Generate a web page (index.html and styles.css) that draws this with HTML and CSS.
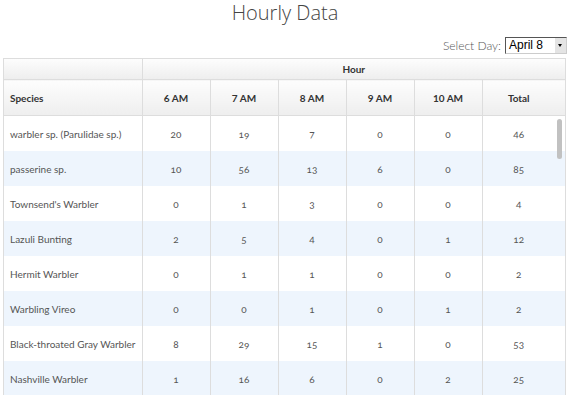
FILE: index.html
```html
<!DOCTYPE html>
<html lang="en">
<head>
    <meta charset="UTF-8">
    <title>Hourly Data</title>
    <link rel="stylesheet" href="styles.css">
</head>
<body>

<h1 class="page-title">Hourly Data</h1>

<div class="day-picker">
    <label for="daySelect">Select Day:</label>
    <div class="select-box" id="daySelect">
        <span class="select-value">April 8</span>
        <span class="select-arrow"></span>
    </div>
</div>

<div class="data-table">
    <table class="table-head">
        <colgroup>
            <col class="col-species">
            <col class="col-hour"><col class="col-hour"><col class="col-hour"><col class="col-hour"><col class="col-hour">
            <col class="col-total">
        </colgroup>
        <tr class="group-row">
            <th></th>
            <th colspan="6">Hour</th>
        </tr>
        <tr class="label-row">
            <th class="species">Species</th>
            <th>6 AM</th>
            <th>7 AM</th>
            <th>8 AM</th>
            <th>9 AM</th>
            <th>10 AM</th>
            <th class="total">Total</th>
        </tr>
    </table>

    <div class="table-body">
        <table>
            <colgroup>
                <col class="col-species">
                <col class="col-hour"><col class="col-hour"><col class="col-hour"><col class="col-hour"><col class="col-hour">
                <col class="col-total">
            </colgroup>
            <tr><td class="species">warbler sp. (Parulidae sp.)</td><td>20</td><td>19</td><td>7</td><td>0</td><td>0</td><td class="total">46</td></tr>
            <tr><td class="species">passerine sp.</td><td>10</td><td>56</td><td>13</td><td>6</td><td>0</td><td class="total">85</td></tr>
            <tr><td class="species">Townsend's Warbler</td><td>0</td><td>1</td><td>3</td><td>0</td><td>0</td><td class="total">4</td></tr>
            <tr><td class="species">Lazuli Bunting</td><td>2</td><td>5</td><td>4</td><td>0</td><td>1</td><td class="total">12</td></tr>
            <tr><td class="species">Hermit Warbler</td><td>0</td><td>1</td><td>1</td><td>0</td><td>0</td><td class="total">2</td></tr>
            <tr><td class="species">Warbling Vireo</td><td>0</td><td>0</td><td>1</td><td>0</td><td>1</td><td class="total">2</td></tr>
            <tr><td class="species">Black-throated Gray Warbler</td><td>8</td><td>29</td><td>15</td><td>1</td><td>0</td><td class="total">53</td></tr>
            <tr><td class="species">Nashville Warbler</td><td>1</td><td>16</td><td>6</td><td>0</td><td>2</td><td class="total">25</td></tr>
        </table>
        <div class="scroll-thumb"></div>
    </div>
</div>

</body>
</html>
```

FILE: styles.css
```css
html, body {
    margin: 0;
    padding: 0;
    background-color: #fff;
    font-family: Lato, "Open Sans", sans-serif;
    color: #555;
}

.page-title {
    margin: 0;
    height: 30px;
    line-height: 26px;
    text-align: center;
    font-family: "Open Sans", sans-serif;
    font-weight: 300;
    font-size: 20px;
    color: #444;
}

.day-picker {
    display: flex;
    justify-content: flex-end;
    align-items: center;
    gap: 4px;
    height: 18px;
    margin: 6px 3px 4px 0;
}

.day-picker label {
    font-size: 12px;
    font-weight: 300;
    color: #555;
}

.select-box {
    display: flex;
    align-items: stretch;
    width: 60px;
    height: 15px;
    border-top: 1px solid #555;
    border-left: 1px solid #555;
    border-right: 1px solid #ccc;
    border-bottom: 1px solid #ccc;
    background: #fff;
}

.select-value {
    flex: 1;
    padding-left: 3px;
    font-family: "Liberation Sans", Arial, sans-serif;
    font-size: 12px;
    line-height: 15px;
    color: #000;
}

.select-arrow {
    width: 11px;
    position: relative;
    background: #e4e4e4;
    border-left: 1px solid #fff;
}

.select-arrow::after {
    content: "";
    position: absolute;
    left: 3px;
    top: 6px;
    border-left: 2px solid transparent;
    border-right: 2px solid transparent;
    border-top: 3px solid #000;
}

.data-table {
    margin: 0 4px 0 3px;
    border: 1px solid #ddd;
}

.data-table table {
    width: 100%;
    table-layout: fixed;
    border-collapse: collapse;
}

.col-species { width: 138px; }
.col-hour { width: 68px; }

th {
    background: linear-gradient(to bottom, #fdfdfd, #eeeeee);
    font-size: 10px;
    font-weight: bold;
    color: #333;
    text-align: center;
    border-left: 1px solid #ddd;
    border-bottom: 1px solid #ddd;
    padding: 0;
}

th:first-child {
    border-left: none;
}

.group-row th {
    height: 20px;
}

.label-row th {
    height: 35px;
}

.species {
    text-align: left;
    padding-left: 6px;
}

.total {
    padding-right: 10px;
}

.table-body {
    position: relative;
}

td {
    height: 35px;
    padding: 0;
    font-size: 10px;
    color: #555;
    text-align: center;
    font-variant-numeric: oldstyle-nums;
    border-left: 1px solid #ddd;
}

td:first-child {
    border-left: none;
}

.table-body tr:nth-child(even) td {
    background-color: #eef5fd;
}

.scroll-thumb {
    position: absolute;
    top: 3px;
    right: 3px;
    width: 5px;
    height: 40px;
    border-radius: 3px;
    background-color: #c1c1c1;
}
```
